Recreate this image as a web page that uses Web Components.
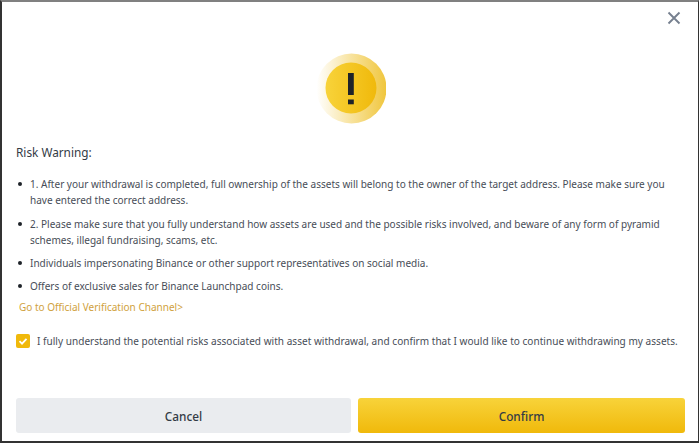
<!DOCTYPE html>
<html><head><meta charset="utf-8"><style>
html,body{margin:0;padding:0;background:#fff}
body{width:699px;height:443px;overflow:hidden;font-family:"Noto Sans",sans-serif}
</style></head><body>
<risk-dialog>
<span slot="title">Risk Warning:</span>
<risk-item>1. After your withdrawal is completed, full ownership of the assets will belong to the owner of the target address. Please make sure you have entered the correct address.</risk-item>
<risk-item>2. Please make sure that you fully understand how assets are used and the possible risks involved, and beware of any form of pyramid schemes, illegal fundraising, scams, etc.</risk-item>
<risk-item>Individuals impersonating Binance or other support representatives on social media.</risk-item>
<risk-item>Offers of exclusive sales for Binance Launchpad coins.</risk-item>
<span slot="link">Go to Official Verification Channel&gt;</span>
<risk-check slot="check">I fully understand the potential risks associated with asset withdrawal, and confirm that I would like to continue withdrawing my assets.</risk-check>
<risk-button slot="actions" style="flex:335 0 0">Cancel</risk-button>
<risk-button slot="actions" kind="primary" style="flex:327 0 0">Confirm</risk-button>
</risk-dialog>
<script>
function def(name,html){customElements.define(name,class extends HTMLElement{constructor(){super();this.attachShadow({mode:'open'}).innerHTML=html}})}
def('risk-dialog',`<style>
:host{display:flex;flex-direction:column;box-sizing:border-box;width:699px;height:443px;background:#fff;border:solid #333;border-width:2px 1px 2px 2px;border-top-color:#808080;padding:0 13px 8px 14px;color:#474d57;font-size:10.02px;position:relative}
.close{position:absolute;top:8px;right:16px;width:16px;height:16px}
.hero{display:flex;justify-content:center;padding-top:51px;height:72px}
h2{margin:17px 0 0;font:400 11.8px/20px "Noto Sans",sans-serif;color:#333b45}
.list{margin-top:14px;display:flex;flex-direction:column;gap:7px}
.list ::slotted(risk-item:first-of-type){margin-bottom:1px}
.link{margin:5px 0 0 3px;line-height:16px;color:#d0a13c}
.check{margin-top:18px}
.actions{display:flex;gap:7px;margin-top:auto}
</style>
<svg class="close" viewBox="0 0 16 16"><path d="M2.5 2.5 13.5 13.5M13.5 2.5 2.5 13.5" stroke="#76808f" stroke-width="1.9" fill="none"/></svg>
<div class="hero"><svg width="70" height="72" viewBox="0 0 70 72">
<defs><linearGradient id="o" x1="0" x2="1" y1="0" y2="0"><stop offset="0" stop-color="#fff"/><stop offset="1" stop-color="#f0c63c"/></linearGradient>
<linearGradient id="i" x1="0" x2="1" y1="0" y2="0"><stop offset="0" stop-color="#f8d33a"/><stop offset="1" stop-color="#f0b90b"/></linearGradient></defs>
<circle cx="35.5" cy="35.5" r="35" fill="url(#o)"/><circle cx="35" cy="35" r="25.5" fill="url(#i)"/>
<rect x="32" y="20" width="5.8" height="22" fill="#1e2329"/><rect x="32" y="46.5" width="5.8" height="4.8" fill="#1e2329"/></svg></div>
<h2><slot name="title"></slot></h2>
<div class="list"><slot></slot></div>
<div class="link"><slot name="link"></slot></div>
<div class="check"><slot name="check"></slot></div>
<div class="actions"><slot name="actions"></slot></div>`);
def('risk-item',`<style>
:host{display:grid;grid-template-columns:14px 1fr;line-height:16px}
i{width:4px;height:4px;border-radius:50%;background:#1e2329;margin:6px 0 0 2px}
</style><i></i><div><slot></slot></div>`);
def('risk-check',`<style>
:host{display:flex;align-items:center;gap:7px;line-height:16px;white-space:nowrap;letter-spacing:.03px}
svg{flex:none}
</style><svg width="14" height="14" viewBox="0 0 14 14"><rect width="14" height="14" rx="2" fill="#f0b90b"/><path d="M3.5 7.2 6 9.6 10.5 4.8" stroke="#fff" stroke-width="1.8" fill="none"/></svg><span><slot></slot></span>`);
def('risk-button',`<style>
:host{display:flex;align-items:center;justify-content:center;height:35px;border-radius:3px;background:#eaecef;color:#333b45;font:500 11.8px "Noto Sans",sans-serif}
:host([kind=primary]){background:linear-gradient(180deg,#f8d33a,#f0b90b)}
</style><slot></slot>`);
</script>
</body></html>
